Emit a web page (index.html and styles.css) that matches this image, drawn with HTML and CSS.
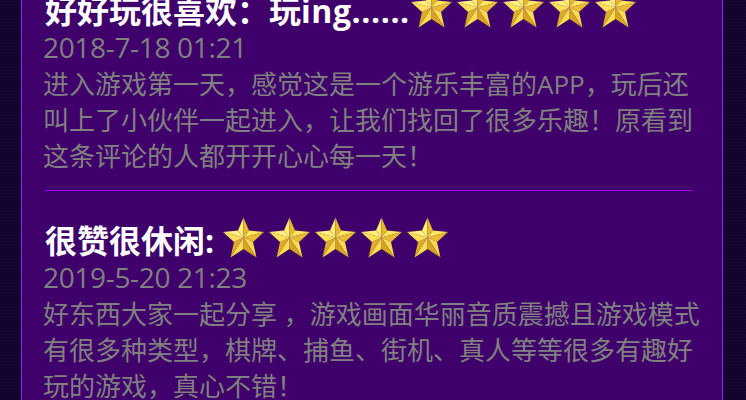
FILE: index.html
```html
<!DOCTYPE html>
<html lang="zh-CN">
<head>
  <meta charset="UTF-8" />
  <title>评论</title>
  <link rel="stylesheet" href="styles.css">
</head>
<body>
  <svg class="defs" width="0" height="0">
    <symbol id="star" viewBox="0 0 41 40">
      <polygon points="20.5,0 15,13 20.5,20" fill="#ffee70"/>
      <polygon points="20.5,0 26,13 20.5,20" fill="#e6b82e"/>
      <polygon points="26,13 41,14.5 20.5,20" fill="#ffe65c"/>
      <polygon points="41,14.5 30,24.5 20.5,20" fill="#e9bd33"/>
      <polygon points="30,24.5 33.5,40 20.5,20" fill="#fbdc50"/>
      <polygon points="33.5,40 20.5,31.5 20.5,20" fill="#d6a424"/>
      <polygon points="20.5,31.5 7.5,40 20.5,20" fill="#fbdc50"/>
      <polygon points="7.5,40 11,24.5 20.5,20" fill="#dcae28"/>
      <polygon points="11,24.5 0,14.5 20.5,20" fill="#fde058"/>
      <polygon points="0,14.5 15,13 20.5,20" fill="#fff07c"/>
    </symbol>
  </svg>
  <div class="panel">
    <div class="comment">
      <h3 class="title">好好玩很喜欢：玩<span class="latin">ing......</span><span class="stars"><svg><use href="#star"/></svg><svg><use href="#star"/></svg><svg><use href="#star"/></svg><svg><use href="#star"/></svg><svg><use href="#star"/></svg></span></h3>
      <div class="date">2018-7-18 01:21</div>
      <p class="text">进入游戏第一天，感觉这是一个游乐丰富的APP，玩后还叫上了小伙伴一起进入，让我们找回了很多乐趣！原看到这条评论的人都开开心心每一天！</p>
    </div>
    <div class="comment">
      <h3 class="title">很赞很休闲: <span class="stars"><svg><use href="#star"/></svg><svg><use href="#star"/></svg><svg><use href="#star"/></svg><svg><use href="#star"/></svg><svg><use href="#star"/></svg></span></h3>
      <div class="date">2019-5-20 21:23</div>
      <p class="text">好东西大家一起分享 ，游戏画面华丽音质震撼且游戏模式有很多种类型，棋牌、捕鱼、街机、真人等等很多有趣好玩的游戏，真心不错！</p>
    </div>
  </div>
</body>
</html>
```

FILE: styles.css
```css
html, body {
  height: 100%;
}
body {
  margin: 0;
  overflow: hidden;
  background-color: #13042c;
  background-image: radial-gradient(#1c0840 0.6px, transparent 1px);
  background-size: 3px 3px;
  font-family: "Open Sans", "Noto Sans CJK SC", sans-serif;
}
.defs {
  display: block;
}
.panel {
  width: 700px;
  height: 400px;
  overflow: hidden;
  margin: 0 0 0 21px;
  background: #3f006b;
  border-left: 1px solid #9b1cf5;
  border-right: 1px solid #9b1cf5;
}
.comment {
  margin: 0 30px 0 23px;
  padding-bottom: 16px;
  border-bottom: 1px solid #a000ff;
}
.comment:first-child {
  margin-top: -14px;
}
.comment + .comment {
  padding-top: 25px;
  border-bottom: none;
}
.title {
  height: 44px;
  padding-top: 1px;
  margin: 0;
  box-sizing: border-box;
  font-size: 32px;
  line-height: 46px;
  font-weight: bold;
  color: #fff;
}
.latin {
  letter-spacing: 0.57px;
}
.stars {
  margin-left: 1px;
}
.stars svg {
  width: 41px;
  height: 41px;
  margin-right: 5px;
  vertical-align: -5px;
}
.date {
  margin-left: -2px;
  font-size: 28px;
  letter-spacing: -0.33px;
  line-height: 34px;
  color: #808080;
}
.text {
  width: 662px;
  margin: 2px 0 0 -2px;
  font-size: 26px;
  line-height: 36px;
  color: #808080;
}
```
